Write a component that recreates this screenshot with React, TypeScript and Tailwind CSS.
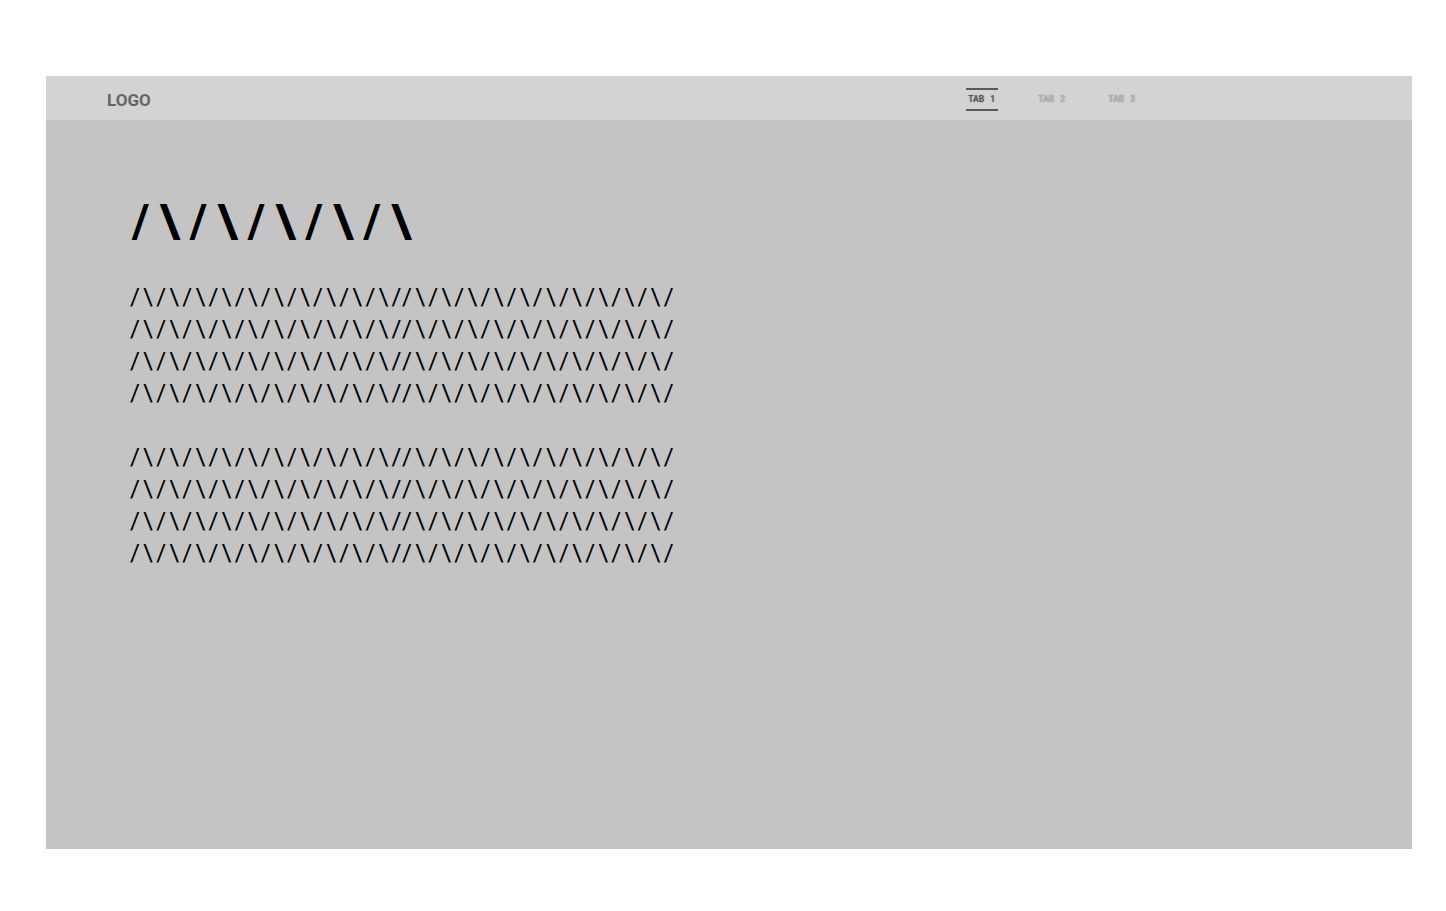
const ROW = '/\\/\\/\\/\\/\\/\\/\\/\\/\\/\\/'
const LINE = ROW + ROW

function Tab({ label, active }: { label: string; active?: boolean }) {
  return (
    <div
      className={
        active
          ? 'w-[32px] h-[23px] flex items-center justify-center border-y-2 border-[#5a5a5a] text-[#555] [text-shadow:0_0_2px_rgba(0,0,0,0.25)]'
          : 'w-[32px] h-[23px] flex items-center justify-center text-[#acacac] [text-shadow:0_0_2px_rgba(0,0,0,0.2)]'
      }
    >
      <span className="text-[8.5px] font-bold [word-spacing:4px] leading-none whitespace-pre">{label}</span>
    </div>
  )
}

function Paragraph() {
  return (
    <div>
      {[0, 1, 2, 3].map(i => (
        <div key={i} className="whitespace-pre">{LINE}</div>
      ))}
    </div>
  )
}

export default function App() {
  return (
    <div className="min-h-screen bg-white pt-[76px] pl-[46px]" style={{ fontFamily: 'Roboto, sans-serif' }}>
      <div className="w-[1366px] h-[773px] bg-[#c4c4c4] flex flex-col">
        <header className="h-[44px] bg-[#d3d3d3] flex items-center">
          <div className="pl-[61px] text-[17px] font-bold text-[#666] leading-none pt-[4px]">LOGO</div>
          <nav className="ml-[815px] flex gap-[38px] pt-[2px]">
            <Tab label="TAB 1" active />
            <Tab label="TAB 2" />
            <Tab label="TAB 3" />
          </nav>
        </header>
        <main className="pl-[84px] pt-[71px]">
          <h1 className="pl-[2px] text-[47px] font-bold leading-[60px] tracking-[10.3px] text-black whitespace-pre">
            {'/\\/\\/\\/\\/\\'}
          </h1>
          <div className="mt-[30px] text-[24px] leading-[32px] tracking-[3.2px] text-black flex flex-col gap-[32px]">
            <Paragraph />
            <Paragraph />
          </div>
        </main>
      </div>
    </div>
  )
}
